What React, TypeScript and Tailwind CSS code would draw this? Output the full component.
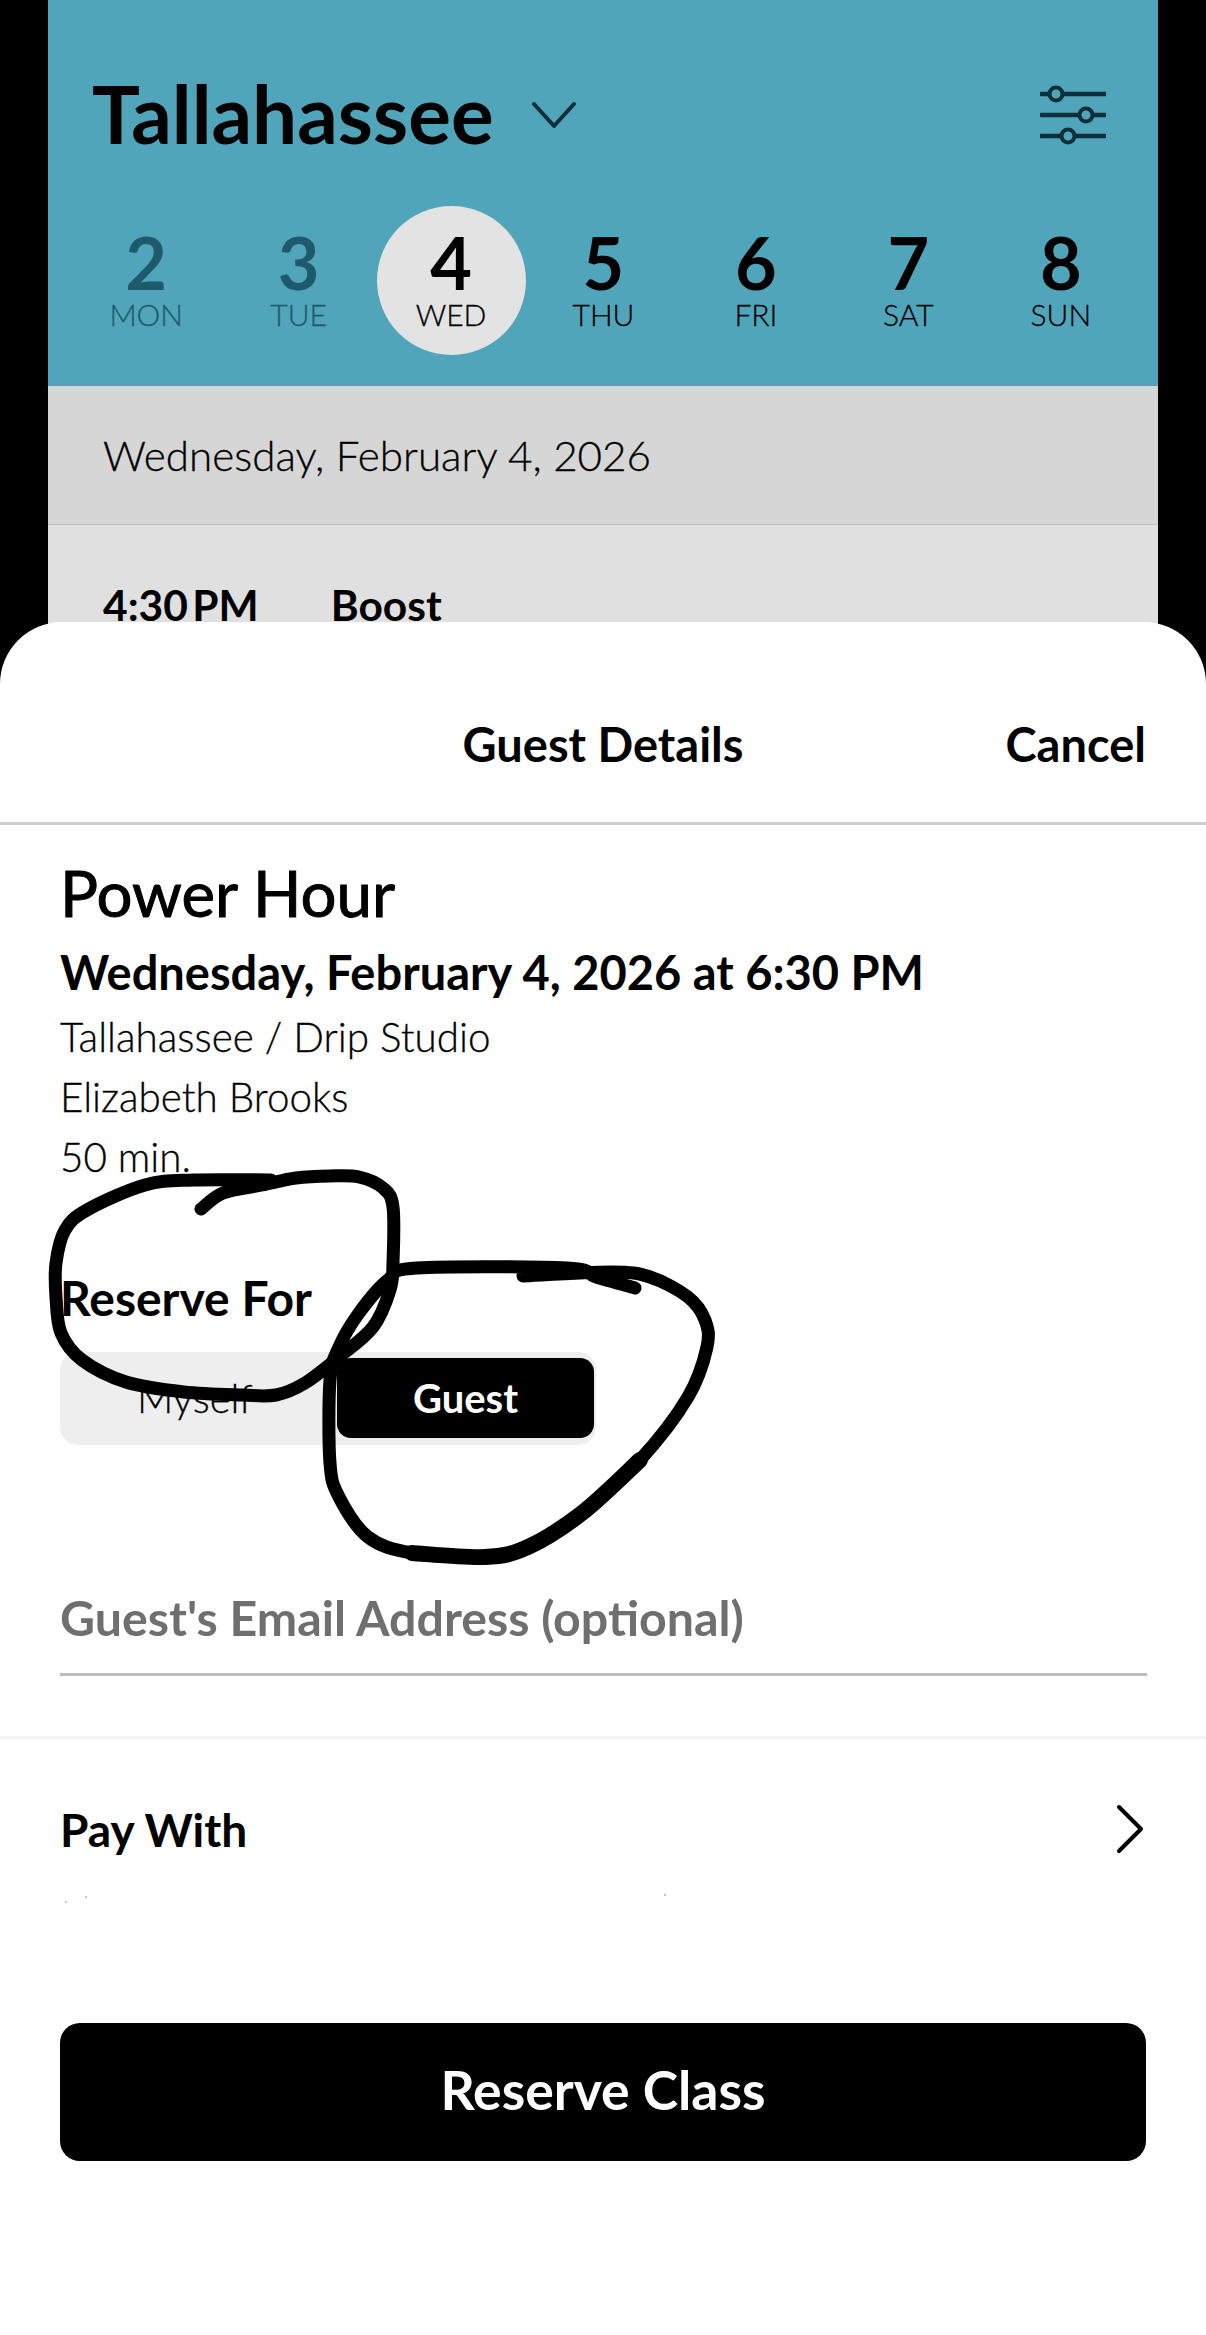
import React from 'react';

const days = [
  { num: '2', label: 'MON', past: true },
  { num: '3', label: 'TUE', past: true },
  { num: '4', label: 'WED', active: true },
  { num: '5', label: 'THU' },
  { num: '6', label: 'FRI' },
  { num: '7', label: 'SAT' },
  { num: '8', label: 'SUN' },
];

// hand drawn circles on top of the screenshot
const leftLoop: number[][] = [
  [201, 1209], [223, 1193], [262, 1185], [296, 1178], [330, 1176], [359, 1177], [383, 1188], [393, 1207],
  [393, 1263], [390, 1290], [373, 1327], [339, 1357], [305, 1383], [276, 1395], [242, 1395], [184, 1392],
  [126, 1382], [82, 1360], [61, 1333], [56, 1297], [56, 1263], [65, 1230], [87, 1210], [145, 1185],
  [194, 1180], [271, 1180],
];
const rightLoop: number[][] = [
  [635, 1288], [596, 1277], [567, 1268], [417, 1268], [388, 1280], [359, 1313], [339, 1347], [330, 1380],
  [330, 1463], [339, 1497], [368, 1537], [412, 1553], [485, 1557], [528, 1547], [582, 1513], [640, 1460],
  [688, 1397], [707, 1347], [705, 1320], [688, 1297], [650, 1277], [611, 1272], [523, 1276],
];
// the marker went over this part twice
const rightLoopHeavy: number[][] = [
  [412, 1553], [485, 1557], [528, 1547], [582, 1513], [640, 1460],
];

function smooth(pts: number[][]) {
  let d = `M${pts[0][0]} ${pts[0][1]}`;
  for (let i = 0; i < pts.length - 1; i++) {
    const p0 = pts[Math.max(i - 1, 0)];
    const p1 = pts[i];
    const p2 = pts[i + 1];
    const p3 = pts[Math.min(i + 2, pts.length - 1)];
    d += ` C${p1[0] + (p2[0] - p0[0]) / 6} ${p1[1] + (p2[1] - p0[1]) / 6} ${p2[0] - (p3[0] - p1[0]) / 6} ${p2[1] - (p3[1] - p1[1]) / 6} ${p2[0]} ${p2[1]}`;
  }
  return d;
}

const FilterIcon = () => (
  <svg width="66" height="62" viewBox="0 0 66 62" fill="none" stroke="#0c2f3a" strokeWidth="4" strokeLinecap="round">
    <path d="M1 10h8M23 10h42M1 31h38M53 31h12M1 52h20M35 52h30" strokeWidth="4.5" />
    <circle cx="16" cy="10" r="6.5" />
    <circle cx="46" cy="31" r="6.5" />
    <circle cx="28" cy="52" r="6.5" />
  </svg>
);

export default function App() {
  return (
    <div className="relative h-[2335px] w-[1206px] overflow-hidden bg-black font-['Lato',sans-serif] text-black">
      <div className="mx-[48px] h-[680px] bg-[#e0e0e0]">
        <div className="h-[386px] bg-[#50a5ba]">
          <div className="flex h-[206px] items-center justify-between pl-[44px] pr-[52px] pt-[24px]">
            <div className="flex items-center gap-[38px]">
              <span className="pb-[5px] text-[80px] font-bold leading-none">Tallahassee</span>
              <svg width="44" height="28" viewBox="0 0 44 28" fill="none" stroke="#0c2f3a" strokeWidth="4" strokeLinecap="round" strokeLinejoin="round">
                <path d="M2 3l20 22L42 3" />
              </svg>
            </div>
            <FilterIcon />
          </div>
          <div className="grid grid-cols-7 pl-[22px] pr-[21px]">
            {days.map((d) => (
              <div key={d.num} className="flex justify-center">
                <div
                  className={`flex h-[149px] w-[149px] flex-col items-center justify-center rounded-full ${
                    d.active ? 'bg-[#e3e3e3]' : ''
                  } ${d.past ? 'text-[#1f5a6c]' : 'text-black'}`}
                >
                  <span className="h-[66px] text-[72px] font-bold leading-[60px]">{d.num}</span>
                  <span className="text-[30px] font-light leading-[32px] [-webkit-text-stroke:0.3px]">{d.label}</span>
                </div>
              </div>
            ))}
          </div>
        </div>
        <div className="flex h-[139px] items-center border-b border-[#bdbdbd] bg-[#d6d6d6] pl-[55px] text-[42.2px] font-light [-webkit-text-stroke:0.3px]">
          Wednesday, February 4, 2026
        </div>
        <div className="flex gap-[72px] pl-[55px] pt-[55px] text-[42.5px] font-bold leading-[50px]">
          <span className="[word-spacing:-6px]">4:30 PM</span>
          <span>Boost</span>
        </div>
      </div>

      <div className="relative -mt-[58px] h-[1713px] rounded-t-[62px] bg-white">
        <div className="relative flex h-[203px] items-center justify-center border-b-[3px] border-[#cfcfcf] pt-[44px]">
          <span className="text-[47px] font-bold">Guest Details</span>
          <span className="absolute right-[60px] text-[47px] font-bold">Cancel</span>
        </div>

        <div className="px-[60px]">
          <div className="pt-[34px] text-[63.5px] leading-[68px] [-webkit-text-stroke:1px_black]">Power Hour</div>
          <div className="pt-[14px] text-[47px] font-bold leading-[62px]">Wednesday, February 4, 2026 at 6:30 PM</div>
          <div className="pt-[4px] text-[40.4px] font-light leading-[60px] [-webkit-text-stroke:0.3px]">Tallahassee / Drip Studio</div>
          <div className="text-[40.4px] font-light leading-[60px] [-webkit-text-stroke:0.3px]">Elizabeth Brooks</div>
          <div className="text-[40.4px] font-light leading-[60px] [-webkit-text-stroke:0.3px]">50 min.</div>

          <div className="pt-[84px] text-[48px] font-bold leading-[54px]">Reserve For</div>
          <div className="mt-[27px] flex h-[93px] w-[536px] rounded-[18px] bg-[#eeeeee] pb-[7px] pr-[2px] pt-[6px]">
            <div className="flex w-[270px] items-center justify-center text-[40px] font-light [-webkit-text-stroke:0.3px]">Myself</div>
            <div className="ml-[7px] flex flex-1 items-center justify-center rounded-[14px] bg-black text-[40px] font-bold text-white">
              Guest
            </div>
          </div>

          <div className="pt-[144px] text-[48.3px] font-bold leading-[56px] text-[#6f6f6f]">Guest's Email Address (optional)</div>
          <div className="mt-[28px] h-[3px] w-[1087px] bg-[#bdbdbd]" />
        </div>

        <div className="mt-[60px] h-[3px] bg-[#f3f3f3]" />

        <div className="flex h-[180px] items-center justify-between pl-[60px] pr-[62px]">
          <span className="text-[46px] font-bold">Pay With</span>
          <svg width="28" height="50" viewBox="0 0 28 50" fill="none" stroke="black" strokeWidth="4" strokeLinecap="round" strokeLinejoin="round">
            <path d="M3 3l22 22L3 47" />
          </svg>
        </div>

        <div className="px-[60px] pt-[104px]">
          <div className="flex h-[138px] w-[1086px] items-center justify-center rounded-[20px] bg-black pb-[6px] text-[53.5px] font-bold text-white">
            Reserve Class
          </div>
        </div>
      </div>

      {/* marker scribbles and the specks left where the marker was wiped */}
      <svg className="pointer-events-none absolute left-0 top-0" width="1206" height="2335" fill="none" stroke="black" strokeLinecap="round" strokeLinejoin="round">
        <path d={smooth(leftLoop)} strokeWidth="13" />
        <path d={smooth(rightLoop)} strokeWidth="13" />
        <path d={smooth(rightLoopHeavy)} strokeWidth="16" />
        <g fill="#b5b5b5" stroke="none">
          <circle cx="86" cy="1897" r="1" />
          <circle cx="66" cy="1902" r="1" />
          <circle cx="665" cy="1895" r="1" />
        </g>
      </svg>
    </div>
  );
}
